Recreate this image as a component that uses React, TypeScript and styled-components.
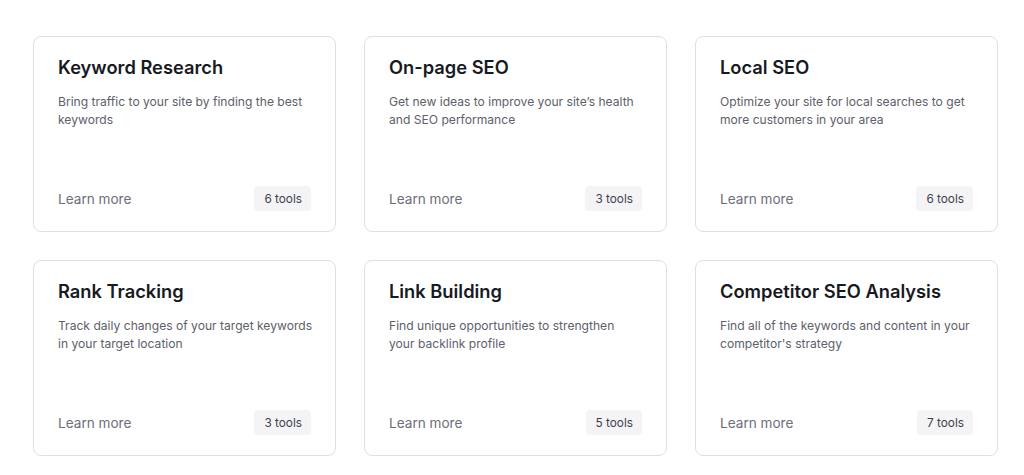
import React from 'react'
import styled, { createGlobalStyle } from 'styled-components'

const GlobalStyle = createGlobalStyle`
  html, body {
    margin: 0;
    padding: 0;
    background: #ffffff;
  }
  body {
    font-family: Inter, "Noto Sans", Arial, sans-serif;
    -webkit-font-smoothing: antialiased;
  }
`

const Grid = styled.div`
  display: grid;
  grid-template-columns: repeat(3, 303px);
  grid-auto-rows: 196px;
  column-gap: 28px;
  row-gap: 28px;
  padding: 36px 0 0 33px;
`

const Card = styled.a`
  display: flex;
  flex-direction: column;
  box-sizing: border-box;
  border: 1px solid #dfe0e7;
  border-radius: 8px;
  padding: 17px 22px 20px 24px;
  text-decoration: none;
  background: #fff;
`

const Title = styled.h3`
  margin: 0;
  font-family: Inter, "Noto Sans", sans-serif;
  font-size: 18.3px;
  line-height: 26px;
  font-weight: 600;
  color: #171a22;
`

// copy keeps the line breaks of the original layout
const Desc = styled.p`
  margin: 13px 0 0 0;
  font-size: 12.1px;
  line-height: 18px;
  color: #5d606b;
  white-space: pre-line;
`

const Footer = styled.div`
  margin-top: auto;
  display: flex;
  align-items: center;
  justify-content: space-between;
  padding-right: 2px;
`

const More = styled.span`
  font-size: 13.6px;
  line-height: 20px;
  color: #6c6e79;
`

const Badge = styled.span`
  display: inline-flex;
  align-items: center;
  height: 25px;
  padding: 0 9px 0 10px;
  border-radius: 4px;
  background: #f4f4f7;
  font-size: 11.8px;
  color: #3f4149;
`

type Item = { title: string; desc: string; tools: number }

const items: Item[] = [
  { title: 'Keyword Research', desc: 'Bring traffic to your site by finding the best\nkeywords', tools: 6 },
  { title: 'On-page SEO', desc: 'Get new ideas to improve your site’s health\nand SEO performance', tools: 3 },
  { title: 'Local SEO', desc: 'Optimize your site for local searches to get\nmore customers in your area', tools: 6 },
  { title: 'Rank Tracking', desc: 'Track daily changes of your target keywords\nin your target location', tools: 3 },
  { title: 'Link Building', desc: 'Find unique opportunities to strengthen\nyour backlink profile', tools: 5 },
  { title: 'Competitor SEO Analysis', desc: "Find all of the keywords and content in your\ncompetitor's strategy", tools: 7 },
]

const App = () => {
  return (
    <>
      <GlobalStyle />
      <Grid>
        {items.map((it) => (
          <Card key={it.title} href="#">
            <Title>{it.title}</Title>
            <Desc>{it.desc}</Desc>
            <Footer>
              <More>Learn more</More>
              <Badge>{it.tools} tools</Badge>
            </Footer>
          </Card>
        ))}
      </Grid>
    </>
  )
}

export default App
